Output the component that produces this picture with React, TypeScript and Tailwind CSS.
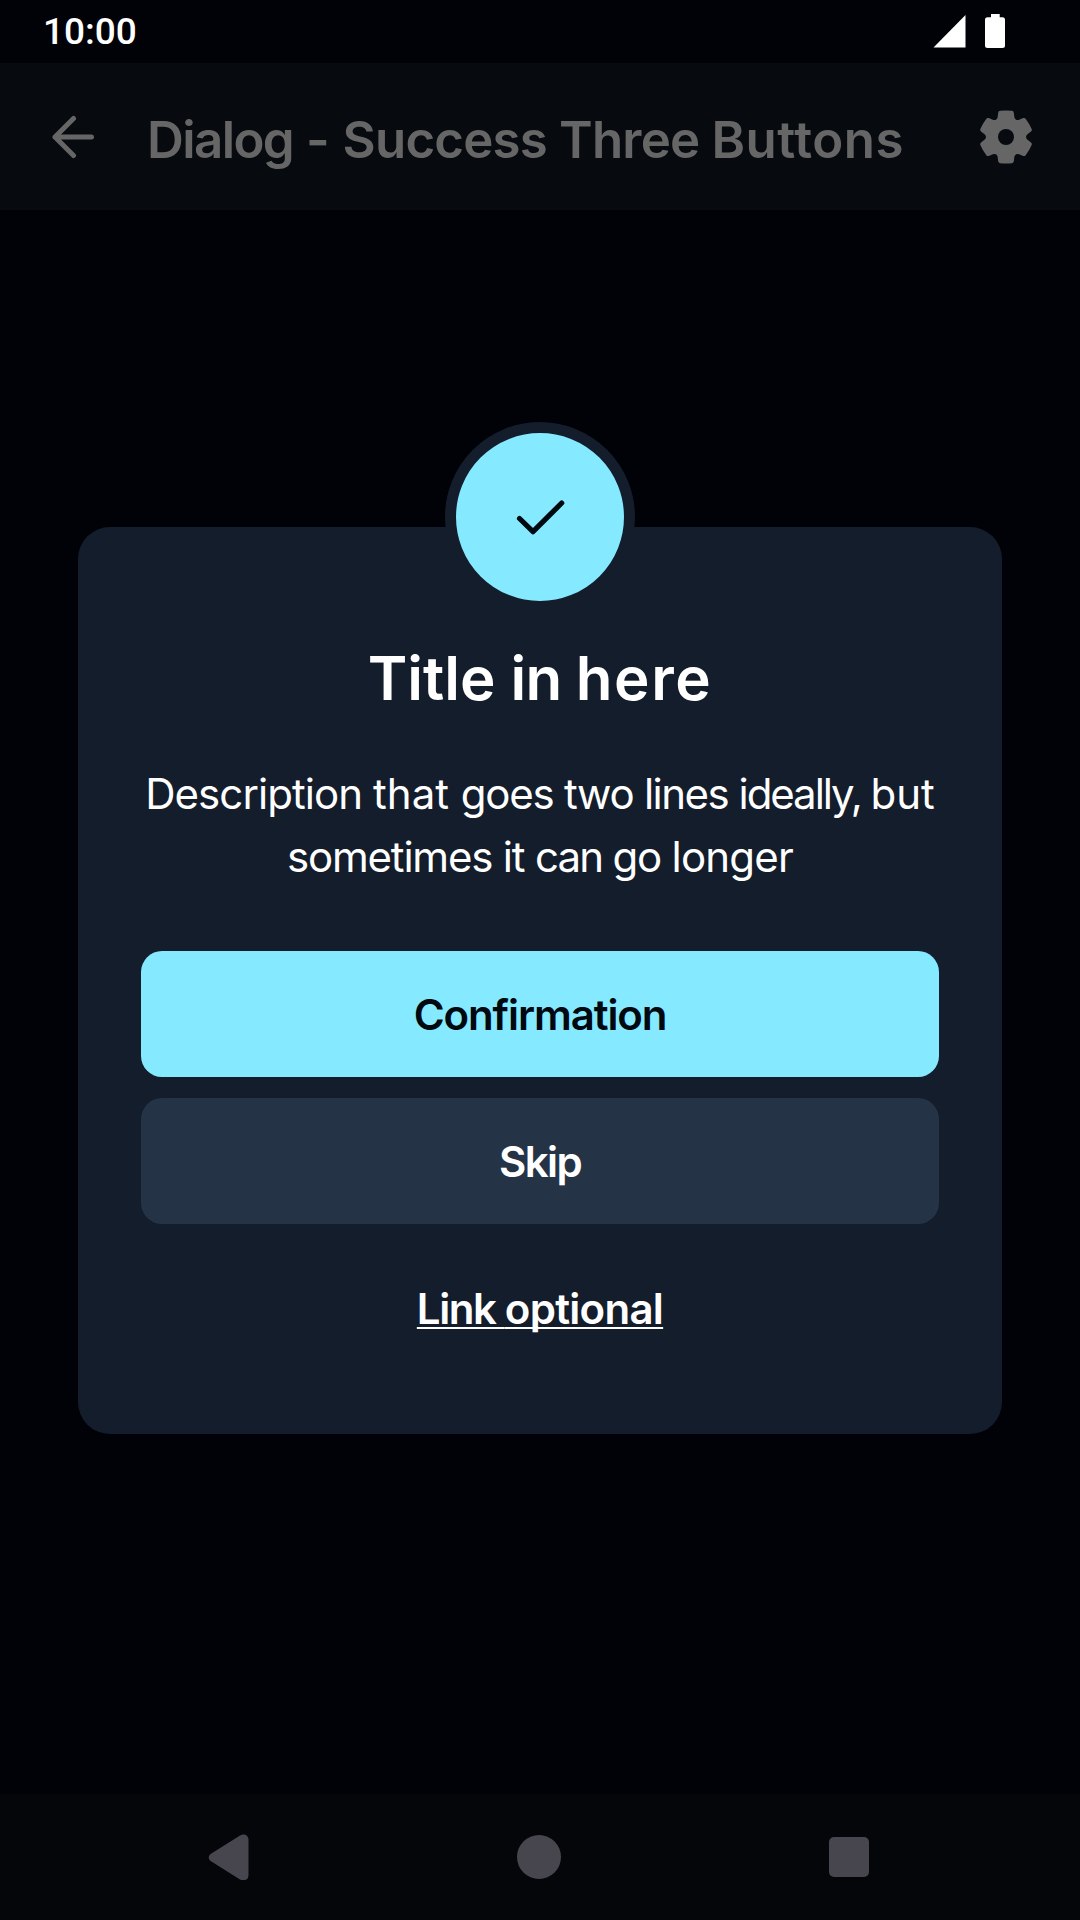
import type { ReactNode } from 'react';

function StatusBar() {
  return (
    <div className="flex h-[63px] items-center justify-between pl-[43px] pr-[75px] text-white">
      <span className="font-['Roboto'] text-[37px] leading-[63px] font-medium">10:00</span>
      <div className="flex items-center gap-[19px] pb-px">
        <svg className="h-[33px] w-[33px]" viewBox="0 0 33 33" fill="currentColor">
          <path d="M0.5 32.5 32.5 0v32.5z" />
        </svg>
        <svg className="h-[34px] w-[20px]" viewBox="0 0 20 34" fill="currentColor">
          <path d="M6 0h8.7v3.2h2.8A2.5 2.5 0 0 1 20 5.7V31.5A2.5 2.5 0 0 1 17.5 34H2.5A2.5 2.5 0 0 1 0 31.5V5.7A2.5 2.5 0 0 1 2.5 3.2H6z" />
        </svg>
      </div>
    </div>
  );
}

const gearAngles = [0, 60, 120, 180, 240, 300];

function GearIcon() {
  return (
    <svg className="h-[54px] w-[54px]" viewBox="-81 -81 162 162" fill="#666666">
      <circle r="59.5" />
      {gearAngles.map((angle) => (
        <path
          key={angle}
          transform={`rotate(${angle})`}
          d="M0 0-30-52Q-25.5-54.8-25-60L-23.5-73Q-22.5-78-18-78.5Q0-80.5 18-78.5Q22.5-78 23.5-73L25-60Q25.5-54.8 30-52Z"
        />
      ))}
      <circle r="24" fill="#070a0f" />
    </svg>
  );
}

function AppBar() {
  return (
    <header className="flex h-[147px] items-center bg-[#070a0f] pl-[51px] pr-[47px] text-[#666666]">
      <svg
        className="h-[44px] w-[44px]"
        viewBox="0 0 44 44"
        fill="none"
        stroke="currentColor"
        strokeWidth="5"
        strokeLinecap="round"
        strokeLinejoin="round"
      >
        <path d="M22.5 3.5 4 22l18.500 18.500M4 22h36.5" />
      </svg>
      <h1 className="ml-[52px] flex-1 pt-[6px] text-[51px] leading-[60px] font-semibold whitespace-pre">
        <span className="tracking-[-1.6px]">Dialog</span>
        {' - '}
        <span className="tracking-[-0.8px]">{'Success Three '}</span>
        <span className="tracking-[0.5px]">Buttons</span>
      </h1>
      <GearIcon />
    </header>
  );
}

function DialogButton({ tone, children }: { tone: string; children: ReactNode }) {
  return (
    <button className={`h-[126px] w-full rounded-[21px] pt-px text-[42px] leading-[54px] font-semibold ${tone}`}>
      {children}
    </button>
  );
}

function SuccessDialog() {
  return (
    <section className="mx-[78px] mt-[317px] flex h-[907px] flex-col items-center rounded-[32px] bg-[#141d2b] px-[63px] text-white">
      <div className="-mt-[105px] flex h-[190px] w-[190px] shrink-0 items-center justify-center rounded-full border-[11px] border-[#141d2b] bg-[#85e9ff]">
        <svg
          className="h-[48px] w-[63px]"
          viewBox="0 0 63 48"
          fill="none"
          stroke="#000810"
          strokeWidth="5.2"
          strokeLinecap="round"
          strokeLinejoin="round"
        >
          <path d="M10.5 25.5 24 38.7 52.7 10" />
        </svg>
      </div>
      <h2 className="mt-[30px] text-[60px] leading-[72px] font-semibold whitespace-pre">
        {'Title '}
        <span className="tracking-[-0.8px]">{'in '}</span>
        <span className="tracking-[1.6px]">here</span>
      </h2>
      <p className="mt-[48px] text-center text-[42px] leading-[63px] whitespace-pre">
        <span className="tracking-[-0.93px]">{'Description '}</span>
        {'that '}
        <span className="tracking-[-1.25px]">{'goes two '}</span>
        <span className="tracking-[-1.5px]">{'lines '}</span>
        <span className="tracking-[-2.07px]">{'ideally, '}</span>
        {'but'}
        <br />
        <span className="tracking-[-1.2px]">{'sometimes it '}</span>
        <span className="tracking-[-1.8px]">{'can '}</span>
        <span className="tracking-[-1.2px]">{'go '}</span>
        <span className="tracking-[-0.8px]">longer</span>
      </p>
      <div className="mt-[63px] flex w-full flex-col gap-[21px]">
        <DialogButton tone="bg-[#85e9ff] text-[#000810] tracking-[-1.1px]">Confirmation</DialogButton>
        <DialogButton tone="bg-[#253346] text-white tracking-[-1.6px]">Skip</DialogButton>
      </div>
      <a
        href="#"
        className="mt-[61px] text-[42px] leading-[48px] font-semibold whitespace-pre underline decoration-[2px] underline-offset-[3px] [text-decoration-skip-ink:none]"
      >
        <span className="tracking-[-1.4px]">{'Link '}</span>
        <span className="tracking-[-0.7px]">optional</span>
      </a>
    </section>
  );
}

function NavigationBar() {
  return (
    <nav className="mt-auto flex h-[126px] items-center justify-between bg-[#050609] pr-[211px] pl-[208px] text-[#47464f]">
      <svg className="h-[46px] w-[41px]" viewBox="0 0 41 46" fill="currentColor">
        <path d="M3 19.8 32 1.6C36-.8 40.500 1.300 40.500 6V41C40.500 45.700 36 47.800 32 45.400L3 27.200C0 25.200 0 21.800 3 19.800z" />
      </svg>
      <div className="h-[44px] w-[44px] rounded-full bg-[#47464f]" />
      <div className="h-[40px] w-[40px] rounded-[5px] bg-[#47464f]" />
    </nav>
  );
}

export default function App() {
  return (
    <main className="flex h-[1920px] w-[1080px] flex-col overflow-hidden bg-[#000207] font-['Inter',sans-serif]">
      <StatusBar />
      <AppBar />
      <SuccessDialog />
      <NavigationBar />
    </main>
  );
}
